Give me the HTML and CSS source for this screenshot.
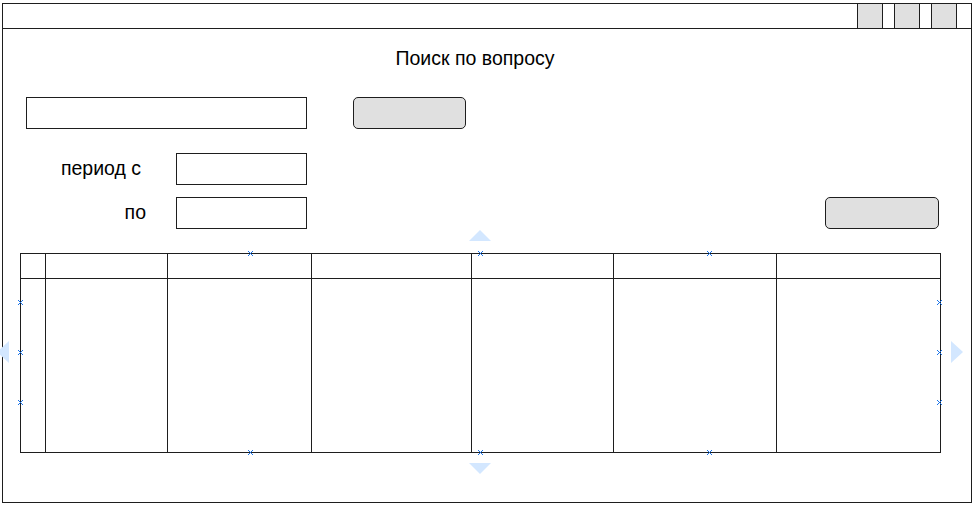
FILE: index.html
```html
<!DOCTYPE html>
<html lang="ru">
<head>
<meta charset="utf-8">
<title>Поиск по вопросу</title>
<link rel="stylesheet" href="styles.css">
</head>
<body>
<div class="window">
  <div class="titlebar">
    <div class="win-btn"></div>
    <div class="win-btn"></div>
    <div class="win-btn"></div>
  </div>
  <div class="main">
    <div class="title">Поиск по вопросу</div>
    <div class="row row-search">
      <div class="input input-wide"></div>
      <div class="btn btn-search"></div>
    </div>
    <div class="row row-from">
      <div class="label label-from">период с</div>
      <div class="input input-date"></div>
    </div>
    <div class="row row-to">
      <div class="label label-to">по</div>
      <div class="input input-date"></div>
      <div class="btn btn-apply"></div>
    </div>
    <div class="grid">
      <div class="cell"></div><div class="cell"></div><div class="cell"></div><div class="cell"></div><div class="cell"></div><div class="cell"></div><div class="cell"></div>
      <div class="cell"></div><div class="cell"></div><div class="cell"></div><div class="cell"></div><div class="cell"></div><div class="cell"></div><div class="cell"></div>
    </div>
  </div>
</div>

<div class="tri tri-up"></div>
<div class="tri tri-down"></div>
<div class="tri tri-left"></div>
<div class="tri tri-right"></div>

<svg class="mark m1" viewBox="0 0 5 5"><path d="M0 0L5 5M5 0L0 5"/></svg>
<svg class="mark m2" viewBox="0 0 5 5"><path d="M0 0L5 5M5 0L0 5"/></svg>
<svg class="mark m3" viewBox="0 0 5 5"><path d="M0 0L5 5M5 0L0 5"/></svg>
<svg class="mark m4" viewBox="0 0 5 5"><path d="M0 0L5 5M5 0L0 5"/></svg>
<svg class="mark m5" viewBox="0 0 5 5"><path d="M0 0L5 5M5 0L0 5"/></svg>
<svg class="mark m6" viewBox="0 0 5 5"><path d="M0 0L5 5M5 0L0 5"/></svg>
<svg class="mark m7" viewBox="0 0 5 5"><path d="M0 0L5 5M5 0L0 5"/></svg>
<svg class="mark m8" viewBox="0 0 5 5"><path d="M0 0L5 5M5 0L0 5"/></svg>
<svg class="mark m9" viewBox="0 0 5 5"><path d="M0 0L5 5M5 0L0 5"/></svg>
<svg class="mark m10" viewBox="0 0 5 5"><path d="M0 0L5 5M5 0L0 5"/></svg>
<svg class="mark m11" viewBox="0 0 5 5"><path d="M0 0L5 5M5 0L0 5"/></svg>
<svg class="mark m12" viewBox="0 0 5 5"><path d="M0 0L5 5M5 0L0 5"/></svg>
</body>
</html>
```
FILE: styles.css
```css
html, body {
  margin: 0;
  padding: 0;
  background: #ffffff;
}
body {
  position: relative;
  width: 974px;
  height: 506px;
  overflow: hidden;
  font-family: "Liberation Sans", Arial, sans-serif;
  color: #000;
}
* { box-sizing: border-box; }

.window {
  margin: 3px 0 0 2px;
  width: 970px;
  height: 500px;
  border: 1px solid #1e1e1e;
}
.titlebar {
  height: 25px;
  border-bottom: 1px solid #1e1e1e;
  display: flex;
  justify-content: flex-end;
  gap: 11px;
  padding-right: 14px;
}
.win-btn {
  width: 26px;
  height: 24px;
  background: #e0e0e0;
  border-left: 1px solid #1e1e1e;
  border-right: 1px solid #1e1e1e;
}

.main {
  display: flex;
  flex-direction: column;
}
.title {
  margin-top: 18px;
  width: 944px;
  height: 22px;
  line-height: 22px;
  font-size: 19.5px;
  text-align: center;
}
.row {
  display: flex;
  align-items: center;
}
.row-search { margin-top: 28px; padding-left: 23px; }
.row-from { margin-top: 24px; }
.row-to { margin-top: 12px; }

.input {
  height: 32px;
  border: 1px solid #1e1e1e;
  background: #fff;
}
.input-wide { width: 281px; }
.input-date { width: 131px; }
.btn {
  height: 32px;
  background: #e0e0e0;
  border: 1px solid #1e1e1e;
  border-radius: 5px;
}
.btn-search { width: 113px; margin-left: 46px; }
.btn-apply { width: 114px; margin-left: auto; margin-right: 32px; }

.label {
  width: 173px;
  font-size: 19.5px;
  line-height: 22px;
  padding-bottom: 2px;
  text-align: right;
}
.label-from { padding-right: 35px; }
.label-to { padding-right: 30px; }

.grid {
  margin-top: 24px;
  margin-left: 17px;
  width: 921px;
  height: 200px;
  display: grid;
  grid-template-columns: 25px 122px 144px 160px 142px 163px 164px;
  grid-template-rows: 25px 174px;
  border-left: 1px solid #1e1e1e;
  border-top: 1px solid #1e1e1e;
}
.cell {
  border-right: 1px solid #1e1e1e;
  border-bottom: 1px solid #1e1e1e;
}

.tri {
  position: absolute;
  width: 0;
  height: 0;
}
.tri-up {
  left: 469px; top: 230px;
  border-left: 11px solid transparent;
  border-right: 11px solid transparent;
  border-bottom: 11px solid #d3e7ff;
}
.tri-down {
  left: 469px; top: 463px;
  border-left: 11px solid transparent;
  border-right: 11px solid transparent;
  border-top: 11px solid #d3e7ff;
}
.tri-right {
  left: 951px; top: 341px;
  border-top: 11px solid transparent;
  border-bottom: 11px solid transparent;
  border-left: 12px solid #d3e7ff;
}
.tri-left {
  left: -3px; top: 341px;
  border-top: 11px solid transparent;
  border-bottom: 11px solid transparent;
  border-right: 12px solid #d3e7ff;
}

.mark {
  position: absolute;
  width: 5px;
  height: 5px;
  overflow: visible;
}
.mark path {
  stroke: #1a73e8;
  stroke-width: 1;
  fill: none;
}
.m1 { left: 248px; top: 251px; }
.m2 { left: 478px; top: 251px; }
.m3 { left: 707px; top: 251px; }
.m4 { left: 18px; top: 300px; }
.m5 { left: 18px; top: 350px; }
.m6 { left: 18px; top: 400px; }
.m7 { left: 937px; top: 300px; }
.m8 { left: 937px; top: 350px; }
.m9 { left: 937px; top: 400px; }
.m10 { left: 248px; top: 450px; }
.m11 { left: 478px; top: 450px; }
.m12 { left: 707px; top: 450px; }
```
